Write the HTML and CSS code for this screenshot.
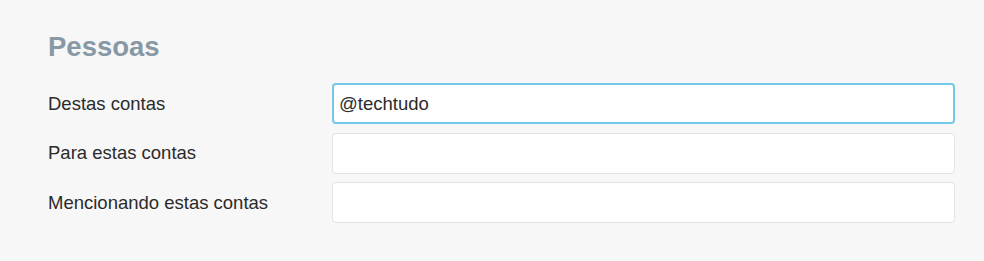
FILE: index.html
```html
<!DOCTYPE html>
<html lang="pt">
<head>
<meta charset="utf-8">
<link rel="stylesheet" href="styles.css">
</head>
<body>
<section class="panel">
  <h2 class="title">Pessoas</h2>
  <div class="form">
    <label class="label" for="f1">Destas contas</label>
    <input class="field field-focus" id="f1" type="text" value="@techtudo">
    <label class="label" for="f2">Para estas contas</label>
    <input class="field" id="f2" type="text">
    <label class="label" for="f3">Mencionando estas contas</label>
    <input class="field" id="f3" type="text">
  </div>
</section>
</body>
</html>
```
FILE: styles.css
```css
html, body {
  margin: 0;
  padding: 0;
  background: #f7f7f7;
}
body {
  width: 984px;
  height: 261px;
  overflow: hidden;
  font-family: "Liberation Sans", Arial, sans-serif;
}
.panel {
  padding: 31px 0 0 48px;
}
.title {
  margin: 0 0 20px 0;
  font-size: 27.5px;
  line-height: 32px;
  font-weight: bold;
  color: #8899a6;
}
.form {
  display: grid;
  grid-template-columns: 284px 623px;
  grid-auto-rows: 41px;
  row-gap: 8.5px;
  align-items: center;
}
.label {
  font-size: 18.5px;
  color: #2b2b2b;
}
.field {
  box-sizing: border-box;
  width: 623px;
  height: 41px;
  margin: 0;
  padding: 0 6px;
  border: 1px solid #e3e3e3;
  border-radius: 4px;
  background: #ffffff;
  font-family: "Liberation Sans", Arial, sans-serif;
  font-size: 18.5px;
  color: #2b2b2b;
  outline: none;
}
.field-focus {
  border: 2px solid #74c8ea;
  padding: 0 5px;
}
```
